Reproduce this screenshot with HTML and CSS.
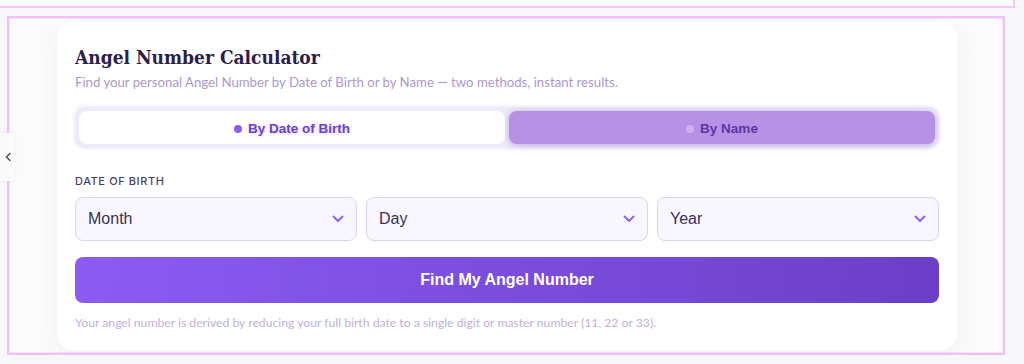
FILE: index.html
```html
<!DOCTYPE html>
<html>
<head>
<meta charset="utf-8">
<link rel="stylesheet" href="styles.css">
</head>
<body>
<div class="topbox"></div>
<button class="side-tab" aria-label="collapse">
  <svg width="8" height="10" viewBox="0 0 8 10"><path d="M6 1.5 L2.5 5 L6 8.5" fill="none" stroke="#555" stroke-width="1.6" stroke-linecap="round" stroke-linejoin="round"/></svg>
</button>
<section class="frame">
  <div class="card">
    <h2 class="title">Angel Number Calculator</h2>
    <p class="subtitle">Find your personal Angel Number by Date of Birth or by Name — two methods, instant results.</p>
    <div class="tabs">
      <div class="tab active"><span class="dot"></span>By Date of Birth</div>
      <div class="tab inactive"><span class="dot"></span>By Name</div>
    </div>
    <div class="label">DATE OF BIRTH</div>
    <div class="selects">
      <div class="select"><span>Month</span><svg class="chev" width="12" height="8" viewBox="0 0 12 8"><path d="M1.5 1.5 L6 6 L10.5 1.5" fill="none" stroke="#8b5cf6" stroke-width="1.8" stroke-linecap="round" stroke-linejoin="round"/></svg></div>
      <div class="select"><span>Day</span><svg class="chev" width="12" height="8" viewBox="0 0 12 8"><path d="M1.5 1.5 L6 6 L10.5 1.5" fill="none" stroke="#8b5cf6" stroke-width="1.8" stroke-linecap="round" stroke-linejoin="round"/></svg></div>
      <div class="select"><span>Year</span><svg class="chev" width="12" height="8" viewBox="0 0 12 8"><path d="M1.5 1.5 L6 6 L10.5 1.5" fill="none" stroke="#8b5cf6" stroke-width="1.8" stroke-linecap="round" stroke-linejoin="round"/></svg></div>
    </div>
    <button class="cta">Find My Angel Number</button>
    <p class="note">Your angel number is derived by reducing your full birth date to a single digit or master number (11, 22 or 33).</p>
  </div>
</section>
</body>
</html>
```
FILE: styles.css
```css
html, body {
  margin: 0;
  padding: 0;
  background: #f8f8fa;
  width: 1024px;
  height: 364px;
  overflow: hidden;
}
body {
  position: relative;
  font-family: "Liberation Sans", Arial, sans-serif;
}
.topbox {
  width: 1013px;
  height: 6px;
  background: #fdfcfe;
  border-right: 2px solid #f3c6f7;
  border-bottom: 2px solid #f3c6f7;
}
.frame {
  margin: 8px 0 0 7px;
  border: 2px solid #f1bff6;
  box-shadow: inset 0 0 0 1px #f9e2fb;
  background: #fbfbfc;
  padding: 4px 46px 0 48px;
  box-sizing: border-box;
  width: 998px;
  height: 339px;
  overflow: hidden;
}
.card {
  background: #fff;
  border-radius: 16px;
  box-shadow: 0 4px 24px rgba(60, 40, 110, 0.06);
  padding: 23px 18px 20px 18px;
  height: 328px;
  box-sizing: border-box;
}
.title {
  margin: 0;
  font-family: "DejaVu Serif Condensed", "DejaVu Serif", serif;
  font-weight: bold;
  font-size: 19px;
  line-height: 24px;
  color: #2b1d4c;
}
.subtitle {
  margin: 5px 0 0;
  font-family: Lato, sans-serif;
  font-size: 13.2px;
  line-height: 16px;
  color: #ab98cf;
}
.tabs {
  margin-top: 17px;
  display: flex;
  gap: 4px;
  padding: 4px;
  background: #efe9fc;
  border-radius: 10px;
  box-shadow: 0 0 4px rgba(170, 140, 230, 0.25);
}
.tab {
  flex: 1;
  height: 33px;
  border-radius: 8px;
  display: flex;
  align-items: center;
  justify-content: center;
  gap: 6px;
  font-weight: bold;
  font-size: 13.5px;
  padding-top: 2px;
  box-sizing: border-box;
}
.tab .dot {
  width: 8px;
  height: 8px;
  border-radius: 50%;
}
.tab.active {
  background: #fff;
  color: #6b3fcf;
  text-shadow: 0 1px 4px rgba(110, 70, 200, 0.25);
}
.tab.active .dot { background: #8b5cf6; }
.tab.inactive {
  background: #b691e6;
  color: #5a36a8;
  box-shadow: 0 1px 6px rgba(80, 50, 150, 0.35);
}
.tab.inactive .dot { background: #cbb1f0; }
.label {
  margin-top: 26px;
  font-family: Inter, sans-serif;
  font-size: 11px;
  font-weight: 500;
  letter-spacing: 0.6px;
  color: #4b3d6b;
  line-height: 14px;
}
.selects {
  margin-top: 9px;
  display: flex;
  gap: 9px;
}
.select {
  flex: 1;
  height: 44px;
  box-sizing: border-box;
  border: 1.5px solid #ddd2f6;
  border-radius: 8px;
  background: #f8f6ff;
  display: flex;
  align-items: center;
  justify-content: space-between;
  padding: 0 12px 0 12px;
  font-size: 16px;
  color: #3b3156;
}
.cta {
  display: block;
  width: 100%;
  margin-top: 16px;
  height: 46px;
  border: none;
  border-radius: 8px;
  background: linear-gradient(100deg, #8b5cf5 0%, #7a4ddd 50%, #6c3fc8 100%);
  color: #fff;
  font-family: "Liberation Sans", Arial, sans-serif;
  font-weight: bold;
  font-size: 16px;
}
.note {
  margin: 12px 0 0;
  font-family: Lato, sans-serif;
  font-size: 12.2px;
  color: #c1b0e0;
}
.side-tab {
  position: absolute;
  left: 0;
  top: 133px;
  width: 15px;
  height: 48px;
  padding: 0;
  border: none;
  background: #fafafb;
  box-shadow: 0 0 3px rgba(0, 0, 0, 0.06);
  display: flex;
  align-items: center;
  justify-content: center;
}
```
